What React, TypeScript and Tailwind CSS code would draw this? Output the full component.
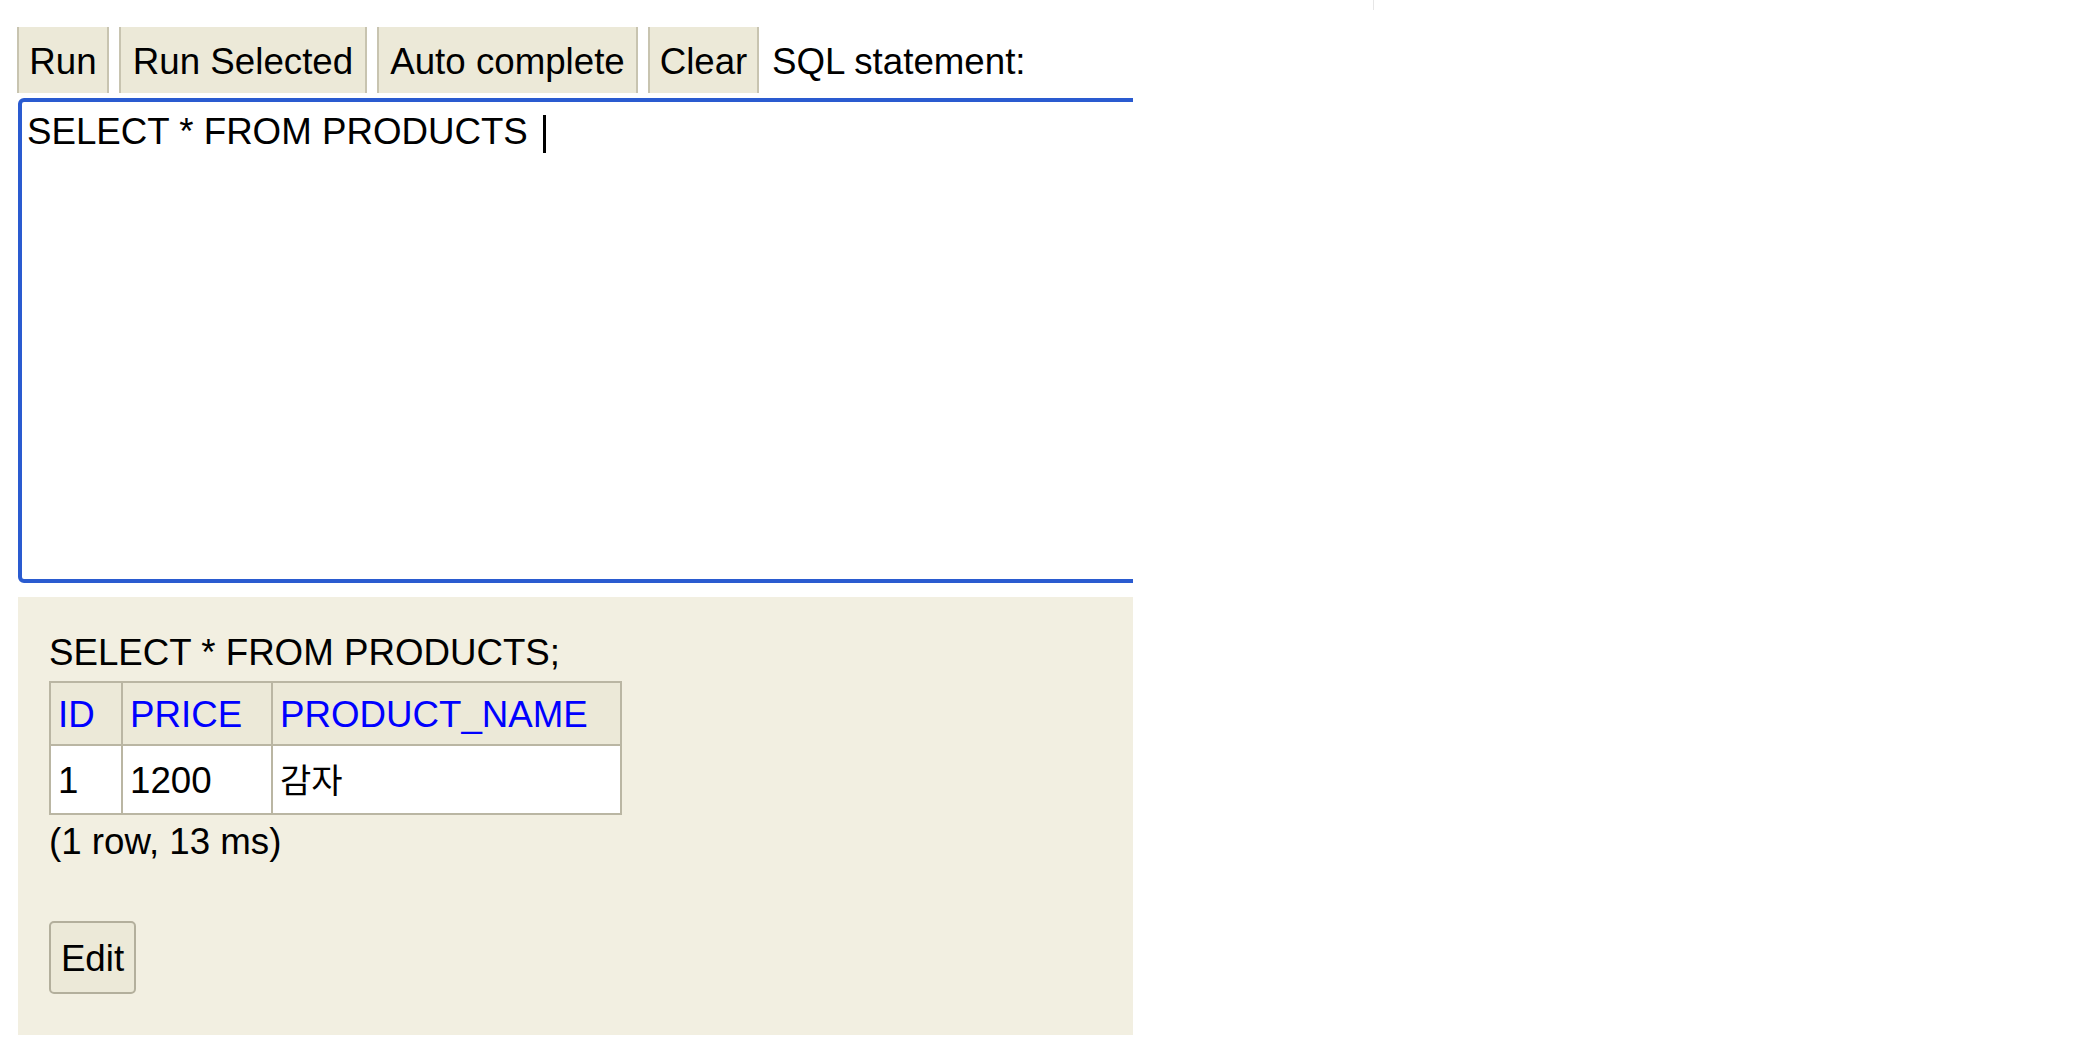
import React from "react";

const toolbarButtons = [
  { label: "Run", width: "w-[92px]" },
  { label: "Run Selected", width: "w-[248px]" },
  { label: "Auto complete", width: "w-[261px]" },
  { label: "Clear", width: "w-[111px]" },
];

const columns = [
  { name: "ID", width: "w-[72px]" },
  { name: "PRICE", width: "w-[150px]" },
  { name: "PRODUCT_NAME", width: "w-[349px]" },
];

export default function App() {
  return (
    <div className="relative min-h-screen bg-white font-['Liberation_Sans','Noto_Sans_CJK_KR',sans-serif] text-[36.7px] leading-[1.15] text-black">
      {/* faint frame edge at the top */}
      <div className="absolute left-[1373px] top-0 h-[10px] w-px bg-[#e6e6e6]" />

      <div className="ml-[17px] w-[1116px] overflow-hidden pt-[27px]">
        {/* toolbar */}
        <div className="flex h-[66px] items-stretch gap-[10px]">
          {toolbarButtons.map((b) => (
            <button
              key={b.label}
              className={`${b.width} flex shrink-0 items-center justify-center border-x-2 border-[#c8c4b0] bg-[#ece9d8] pt-[4px] whitespace-nowrap`}
            >
              {b.label}
            </button>
          ))}
          <span className="ml-[3px] flex items-center pt-[4px] whitespace-nowrap">SQL statement:</span>
        </div>

        {/* editor */}
        <div className="ml-px mt-[5px] h-[485px] w-[1400px] rounded-[6px] border-4 border-[#2a5bd0] bg-white px-[5px] pt-[9px] whitespace-pre-wrap">
          SELECT * FROM PRODUCTS<span className="ml-[15px] inline-block h-[38px] w-[3px] bg-black align-[-9px]" />
        </div>

        {/* result */}
        <div className="ml-px mt-[14px] bg-[#f2efe1] pb-[41px] pl-[31px] pt-[35px]">
          <p>SELECT * FROM PRODUCTS;</p>
          <table className="mt-[7px] w-[571px] table-fixed border-collapse border-2 border-[#bab6a3]">
            <thead>
              <tr className="bg-[#ece9d8]">
                {columns.map((c) => (
                  <th
                    key={c.name}
                    className={`${c.width} h-[63px] border-2 border-[#bab6a3] pl-[7px] pt-[2px] text-left font-normal text-[#0000ff]`}
                  >
                    {c.name}
                  </th>
                ))}
              </tr>
            </thead>
            <tbody>
              <tr className="bg-white">
                <td className="h-[69px] border-2 border-[#bab6a3] pl-[7px] pt-[2px]">1</td>
                <td className="border-2 border-[#bab6a3] pl-[7px] pt-[2px]">1200</td>
                <td className="border-2 border-[#bab6a3] pl-[7px] pt-[2px]">
                  <span className="font-['Noto_Sans_CJK_KR',sans-serif] text-[34px]">감자</span>
                </td>
              </tr>
            </tbody>
          </table>
          <p className="pt-[6px]">(1 row, 13 ms)</p>
          <button className="mt-[58px] flex h-[73px] w-[87px] items-center justify-center rounded-[5px] border-2 border-[#b3af9c] bg-[#ece9d8] pt-[3px]">
            Edit
          </button>
        </div>
      </div>
    </div>
  );
}
